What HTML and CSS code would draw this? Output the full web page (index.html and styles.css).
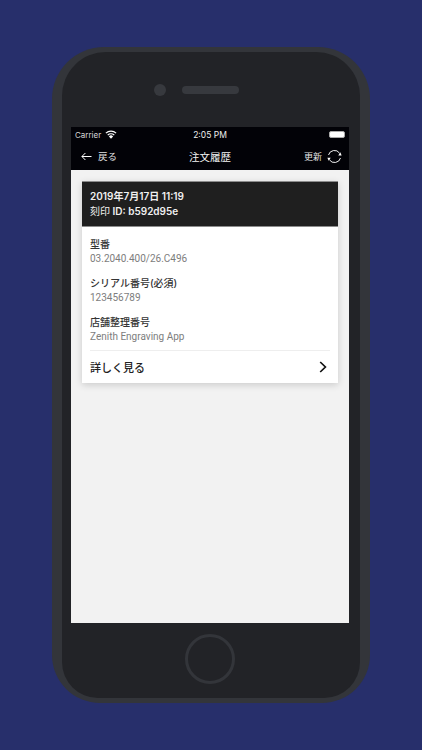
FILE: index.html
```html
<!DOCTYPE html>
<html lang="ja">
<head>
<meta charset="utf-8">
<title>注文履歴</title>
<link rel="stylesheet" href="styles.css">
</head>
<body>
<div class="phone">
  <div class="bezel">
    <div class="sensors">
      <span class="camera"></span>
      <span class="speaker"></span>
    </div>
    <div class="screen">
      <div class="status">
        <div class="status-left">
          <span>Carrier</span>
          <svg class="wifi" viewBox="0 0 12 9" width="12" height="9"><path d="M6 8.8 3.9 6.4a3 3 0 0 1 4.2 0z" fill="#fff"/><path d="M2.7 5.1a4.8 4.8 0 0 1 6.6 0M.9 3.1a7.4 7.4 0 0 1 10.2 0" fill="none" stroke="#fff" stroke-width="1.3"/></svg>
        </div>
        <div class="status-time">2:05 PM</div>
        <div class="status-right">
          <span class="battery"></span>
        </div>
      </div>
      <div class="nav">
        <div class="nav-left">
          <svg class="back" viewBox="0 0 11 9" width="11" height="9"><path d="M10.5 4.5H1M4.4 1 .9 4.5 4.4 8" fill="none" stroke="#fff" stroke-width="1"/></svg>
          <span>戻る</span>
        </div>
        <div class="nav-title">注文履歴</div>
        <div class="nav-right">
          <span>更新</span>
          <svg class="refresh" viewBox="0 0 16 16" width="15" height="15"><path d="M1.6 6.4A6.6 6.6 0 0 1 13.4 4.4M14.4 9.6A6.6 6.6 0 0 1 2.6 11.6" fill="none" stroke="#fff" stroke-width="1"/><path d="M15.6 6.8 12 6.8 14.2 3.4zM.4 9.2 4 9.2 1.8 12.6z" fill="#fff"/></svg>
        </div>
      </div>
      <div class="content">
        <div class="card">
          <div class="card-head">
            <div>2019年7月17日 11:19</div>
            <div><span class="stamp">刻印</span> ID: b592d95e</div>
          </div>
          <div class="card-body">
            <div class="field">
              <div class="label">型番</div>
              <div class="value">03.2040.400/26.C496</div>
            </div>
            <div class="field">
              <div class="label">シリアル番号(必須)</div>
              <div class="value">123456789</div>
            </div>
            <div class="field">
              <div class="label">店舗整理番号</div>
              <div class="value">Zenith Engraving App</div>
            </div>
            <div class="more">
              <span>詳しく見る</span>
              <svg class="chevron" viewBox="0 0 8 12" width="8" height="12"><path d="M1.2 1 6.4 6 1.2 11" fill="none" stroke="#111" stroke-width="1.7"/></svg>
            </div>
          </div>
        </div>
      </div>
    </div>
    <div class="home-area">
      <span class="home"></span>
    </div>
  </div>
</div>
</body>
</html>
```

FILE: styles.css
```css
* {
  box-sizing: border-box;
}

html,
body {
  margin: 0;
  height: 750px;
  overflow: hidden;
}

body {
  width: 422px;
  padding-top: 47px;
  background: #272f6b;
  font-family: "Inter", "Noto Sans CJK JP", sans-serif;
  display: flex;
  justify-content: center;
  align-items: flex-start;
}

.phone {
  width: 318px;
  height: 656px;
  background: #33353a;
  border-radius: 52px 52px 48px 48px;
  padding: 5px 10px;
}

.bezel {
  height: 646px;
  background: #222327;
  border-radius: 44px 44px 36px 36px;
  padding: 0 11px 0 9px;
  display: flex;
  flex-direction: column;
}

.sensors {
  height: 75px;
  display: flex;
  align-items: center;
  padding: 0 0 0 83px;
  gap: 16px;
}

.camera {
  width: 12px;
  height: 12px;
  border-radius: 50%;
  background: #37393e;
}

.speaker {
  width: 57px;
  height: 8px;
  border-radius: 4px;
  background: #37393e;
}

.screen {
  height: 496px;
  background: #f2f2f2;
  display: flex;
  flex-direction: column;
}

.status {
  height: 15px;
  background: #020207;
  color: #d8d8d8;
  font-size: 8px;
  display: flex;
  align-items: center;
  padding: 0 4px;
}

.status-left {
  display: flex;
  align-items: center;
  gap: 4px;
  flex: 1;
}

.status-time {
  flex: 1;
  text-align: center;
  font-size: 8.5px;
  color: #eee;
}

.status-right {
  flex: 1;
  display: flex;
  justify-content: flex-end;
}

.battery {
  width: 16px;
  height: 7px;
  background: #fff;
  border-radius: 2px;
  border: 1px solid #aaa;
}

.nav {
  height: 28px;
  background: #020207;
  color: #e4e4e4;
  font-size: 9.5px;
  display: flex;
  align-items: center;
  justify-content: space-between;
  padding: 0 7px 0 10px;
}

.nav-left,
.nav-right {
  display: flex;
  align-items: center;
}

.nav-left {
  width: 80px;
  gap: 6px;
}

.nav-right {
  width: 83px;
  gap: 5px;
  justify-content: flex-end;
}

.nav-right span {
  font-size: 9px;
}

.nav-title {
  font-size: 10.5px;
  color: #f4f4f4;
}

.content {
  flex: 1;
  padding: 11px;
}

.card {
  background: #fff;
  box-shadow: 0 2px 7px rgba(0, 0, 0, 0.16);
}

.card-head {
  height: 46px;
  background: #1f1f1f;
  border: 1px solid #8c8c8c;
  border-width: 1px 0;
  color: #f0f0f0;
  font-size: 10px;
  font-weight: 600;
  line-height: 15px;
  padding: 7px 8px 0;
}

.stamp {
  font-weight: 400;
}

.card-body {
  padding: 11px 8px 0;
}

.field {
  height: 39px;
}

.label {
  font-size: 10px;
  line-height: 13px;
  color: #333;
  font-weight: 500;
}

.value {
  font-family: "Roboto", "Noto Sans CJK JP", sans-serif;
  font-size: 10px;
  line-height: 14px;
  margin-top: 1px;
  color: #7d7d7d;
}

.more {
  height: 33px;
  margin-top: -5px;
  border-top: 1px solid #eee;
  display: flex;
  align-items: center;
  justify-content: space-between;
  font-size: 11px;
  font-weight: 500;
  color: #222;
  padding-right: 3px;
}

.home-area {
  flex: 1;
  display: flex;
  justify-content: center;
  align-items: flex-start;
  padding-top: 11px;
}

.home {
  width: 50px;
  height: 50px;
  border-radius: 50%;
  border: 3px solid #33353a;
}
```
